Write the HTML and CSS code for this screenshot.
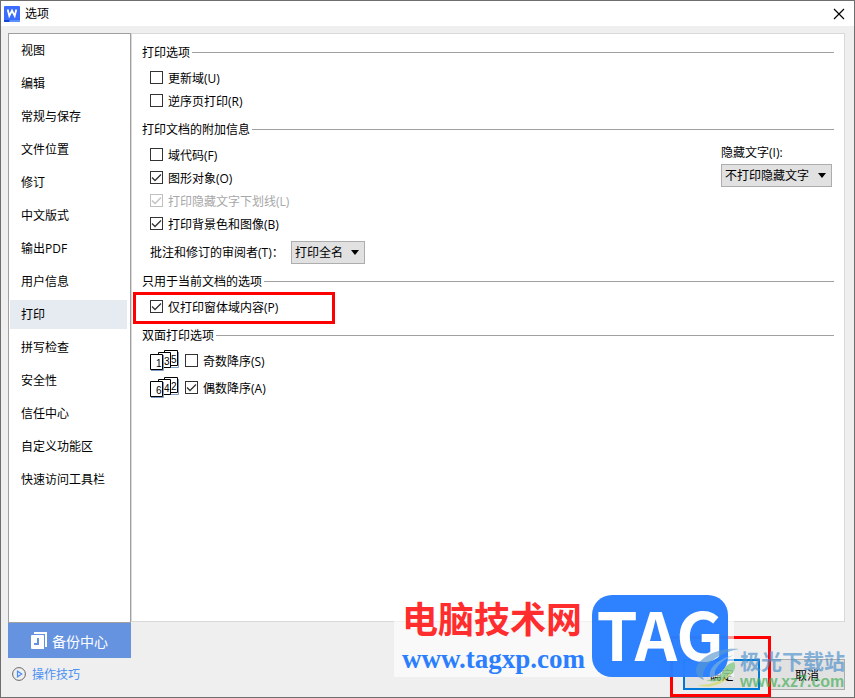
FILE: index.html
```html
<!DOCTYPE html>
<html lang="zh-CN">
<head>
  <meta charset="UTF-8">
  <title>选项</title>
  <meta name="viewport" content="width=device-width, initial-scale=1">
  <link rel="stylesheet" href="styles.css">
</head>
<body>
  <div class="window">
    <header class="titlebar">
      <svg class="logo" width="16" height="16" viewBox="0 0 16 16">
        <rect width="16" height="16" rx="1" fill="#3b6cff"/>
        <path d="M0 14h6l-1 2H1a1 1 0 0 1-1-1z" fill="#1246cc"/>
        <path d="M6 14h10v1a1 1 0 0 1-1 1H5z" fill="#5c92ff"/>
        <path d="M3.700 3.500l1.600 6.500L8 4.500l2.700 5.500 1.600-6.500" fill="none" stroke="#fff" stroke-width="1.800"/>
      </svg>
      <span class="title">选项</span>
      <button class="close" type="button" aria-label="关闭">
        <svg width="12" height="12" viewBox="0 0 12 12"><path d="M1 1l10 10M11 1L1 11" stroke="#000" stroke-width="1.200"/></svg>
      </button>
    </header>

    <main class="content">
      <aside class="side">
        <nav class="menu">
          <a href="#view">视图</a>
          <a href="#edit">编辑</a>
          <a href="#general">常规与保存</a>
          <a href="#files">文件位置</a>
          <a href="#revision">修订</a>
          <a href="#chinese">中文版式</a>
          <a href="#pdf">输出PDF</a>
          <a href="#user">用户信息</a>
          <a href="#print" class="active">打印</a>
          <a href="#spell">拼写检查</a>
          <a href="#security">安全性</a>
          <a href="#trust">信任中心</a>
          <a href="#ribbon">自定义功能区</a>
          <a href="#toolbar">快速访问工具栏</a>
        </nav>
        <button class="backup" type="button">
          <svg width="16" height="18" viewBox="0 0 16 18">
            <path d="M3 0h13v15h-2V2H3z" fill="#fff"/>
            <path d="M1 3h11a1 1 0 0 1 1 1v13H1a1 1 0 0 1-1-1V4a1 1 0 0 1 1-1z" fill="#fff"/>
            <path d="M7 6v6H3" fill="none" stroke="#6593e0" stroke-width="2"/>
          </svg>
          备份中心
        </button>
        <a class="tips" href="#tips">
          <svg width="14" height="14" viewBox="0 0 14 14" fill="none">
            <circle cx="7" cy="7" r="6.400" stroke="#666"/>
            <path d="M5.500 4.200v5.600L9.700 7z" stroke="#4a90f5" stroke-width="1.200"/>
          </svg>
          操作技巧
        </a>
      </aside>

      <section class="main">
        <div class="panel">
          <section class="group">
            <h2>打印选项</h2>
            <label class="row"><input type="checkbox">更新域(U)</label>
            <label class="row"><input type="checkbox">逆序页打印(R)</label>
          </section>

          <section class="group">
            <h2>打印文档的附加信息</h2>
            <div class="columns">
              <div>
                <label class="row"><input type="checkbox">域代码(F)</label>
                <label class="row"><input type="checkbox" checked>图形对象(O)</label>
                <label class="row disabled"><input type="checkbox" checked disabled>打印隐藏文字下划线(L)</label>
                <label class="row"><input type="checkbox" checked>打印背景色和图像(B)</label>
              </div>
              <div class="hidden-text">
                <label for="hidden-text">隐藏文字(I):</label>
                <select id="hidden-text" class="wide"><option>不打印隐藏文字</option></select>
              </div>
            </div>
            <div class="reviewer">
              <label for="reviewer">批注和修订的审阅者(T)：</label>
              <select id="reviewer"><option>打印全名</option></select>
            </div>
          </section>

          <section class="group">
            <h2>只用于当前文档的选项</h2>
            <div class="marked">
              <label class="row"><input type="checkbox" checked>仅打印窗体域内容(P)</label>
            </div>
          </section>

          <section class="group duplex">
            <h2>双面打印选项</h2>
            <div class="order">
              <svg width="29" height="21" viewBox="0 0 29 21">
                <g fill="#fff" stroke="#000">
                  <path d="M16 17.500h12.500V2" stroke="#7d9cc4" fill="none"/>
                  <path d="M14.500.5h13v15h-13z"/>
                  <path d="M8.500 2.500h12v15h-12z"/>
                  <path d="M.5 4.500h12v15H.5z"/>
                  <path d="M1 20.500h12.500V5" stroke="#7d9cc4" fill="none"/>
                </g>
                <text x="6" y="17">1</text><text x="14" y="15">3</text><text x="21" y="13">5</text>
              </svg>
              <label class="row"><input type="checkbox">奇数降序(S)</label>
            </div>
            <div class="order">
              <svg width="29" height="21" viewBox="0 0 29 21">
                <g fill="#fff" stroke="#000">
                  <path d="M16 17.500h12.500V2" stroke="#7d9cc4" fill="none"/>
                  <path d="M14.500.5h13v15h-13z"/>
                  <path d="M8.500 2.500h12v15h-12z"/>
                  <path d="M.5 4.500h12v15H.5z"/>
                  <path d="M1 20.500h12.500V5" stroke="#7d9cc4" fill="none"/>
                </g>
                <text x="6" y="17">6</text><text x="14" y="15">4</text><text x="21" y="13">2</text>
              </svg>
              <label class="row"><input type="checkbox" checked>偶数降序(A)</label>
            </div>
          </section>
        </div>

        <footer class="actions">
          <button class="ok" type="button">确定</button>
          <button type="button">取消</button>
        </footer>
      </section>
    </main>

    <div class="red-frame"></div>

    <div class="site-mark">
      <div class="site-name">
        <strong>电脑技术网</strong>
        <span>www.tagxp.com</span>
      </div>
      <div class="tag">TAG</div>
    </div>

    <div class="download-mark">
      <svg width="46" height="42" viewBox="0 0 46 42">
        <path d="M45 2C24 0 3 11 2 23c0 6 4 9 8 10C5 22 20 7 45 2z" fill="#5a98d0"/>
        <path d="M40 8C26 11 14 20 16 30l5-1C19 21 28 13 40 8z" fill="#7fb4dc"/>
        <path d="M40 15c4 8-4 17-16 19-6 1-10 0-12-1 12 0 16-6 18-11 2-4 6-6 10-7z" fill="#6cc070"/>
        <path d="M4 38c14 0 26-4 34-14-4 11-20 19-34 14z" fill="#d0dc58"/>
      </svg>
      <div class="download-name">
        <strong>极光下载站</strong>
        <span>www.xz7.com</span>
      </div>
    </div>
  </div>
</body>
</html>
```
FILE: styles.css
```css
:root {
  --bg: #efefef;
  --line: #a0a0a0;
  --light-line: #d9d9d9;
  --blue: #6593e0;
  --red: #ff0000;
}

*,
*::before,
*::after {
  box-sizing: border-box;
}

body {
  margin: 0;
  font-family: "Open Sans", "Noto Sans CJK SC", sans-serif;
  font-size: 12px;
  color: #000;
}

button,
select,
input {
  margin: 0;
  font: inherit;
  color: inherit;
}

.window {
  position: relative;
  display: flex;
  flex-direction: column;
  min-height: 100vh;
  border: 1px solid #6e6e6e;
  background: var(--bg);
}

.titlebar {
  display: flex;
  align-items: center;
  height: 25px;
  padding: 0 9px 0 3px;
  background: #fff;
}

.title {
  flex: 1;
  margin-left: 5px;
  line-height: 18px;
}

.close {
  display: flex;
  padding: 0;
  border: none;
  background: none;
}

.content {
  flex: 1;
  display: flex;
  padding: 7px 9px 7px 7px;
}

/* left side */
.side {
  display: flex;
  flex-direction: column;
  width: 123px;
}

.menu {
  flex: 1;
  padding-right: 3px;
  padding-left: 1px;
  border: 1px solid var(--line);
  background: #fff;
}

.menu a {
  display: block;
  height: 29px;
  margin: 2px 0 4px;
  padding-left: 11px;
  line-height: 29px;
  color: #000;
  text-decoration: none;
}

.menu a.active {
  background: #e6eaf1;
}

.backup {
  display: flex;
  align-items: center;
  justify-content: center;
  gap: 5px;
  height: 35px;
  padding: 0;
  border: none;
  background: var(--blue);
  color: #fff;
  font-size: 14px;
}

.tips {
  display: flex;
  align-items: center;
  gap: 6px;
  height: 32px;
  padding-left: 4px;
  color: #4a90f5;
  text-decoration: none;
}

/* right side */
.main {
  flex: 1;
  display: flex;
  flex-direction: column;
}

.panel {
  flex: 1;
  padding: 9px 10px;
  border: 1px solid var(--light-line);
  background: #fff;
}

.group {
  margin-bottom: 8px;
}

.group h2 {
  display: flex;
  align-items: center;
  gap: 2px;
  height: 18px;
  margin: 0 0 5px;
  font-size: 12px;
  font-weight: normal;
}

.group h2::after {
  content: "";
  flex: 1;
  height: 1px;
  background: var(--line);
}

.row {
  display: flex;
  align-items: center;
  gap: 5px;
  height: 23px;
  padding-left: 8px;
}

.row.disabled {
  color: #a8a8a8;
}

input[type="checkbox"] {
  appearance: none;
  width: 13px;
  height: 13px;
  border: 1px solid #333;
  background: #fff;
}

input[type="checkbox"]:checked {
  background: #fff url("data:image/svg+xml,%3Csvg xmlns='http://www.w3.org/2000/svg' viewBox='0 0 11 11'%3E%3Cpath d='M1 5.500l3 3 6-6' fill='none' stroke='%23333' stroke-width='1.300'/%3E%3C/svg%3E") center / 11px 11px no-repeat;
}

input[type="checkbox"]:disabled {
  opacity: 0.3;
}

.columns {
  display: flex;
  justify-content: space-between;
}

.hidden-text {
  padding-right: 2px;
}

.hidden-text label {
  display: block;
  height: 21px;
  line-height: 20px;
}

select {
  appearance: none;
  display: block;
  width: 74px;
  height: 23px;
  padding: 0 3px;
  border: 1px solid #adadad;
  border-radius: 0;
  background: #e1e1e1 url("data:image/svg+xml,%3Csvg xmlns='http://www.w3.org/2000/svg' viewBox='0 0 8 5'%3E%3Cpath d='M0 0h8L4 5z'/%3E%3C/svg%3E") right 5px center / 8px 5px no-repeat;
}

select.wide {
  width: 111px;
}

.reviewer {
  display: flex;
  align-items: center;
  height: 24px;
  margin-top: 5px;
  padding-left: 8px;
}

.reviewer label {
  width: 141px;
}

.marked {
  position: relative;
}

.marked::after {
  content: "";
  position: absolute;
  top: -3px;
  left: -9px;
  width: 202px;
  height: 32px;
  border: 3px solid var(--red);
  pointer-events: none;
}

.duplex h2 {
  margin-bottom: 3px;
}

.order {
  display: flex;
  align-items: center;
  height: 27px;
  padding-left: 8px;
}

.order .row {
  padding-left: 6px;
}

.order text {
  font-family: "Liberation Sans", sans-serif;
  font-size: 10px;
}

.actions {
  display: flex;
  align-items: flex-end;
  justify-content: flex-end;
  gap: 9px;
  height: 68px;
}

.actions button {
  width: 76px;
  height: 31px;
  padding: 0;
  border: 1px solid #adadad;
  background: #e1e1e1;
}

.actions .ok {
  width: 77px;
  border: 2px solid #0078d7;
}

/* overlays */
.red-frame {
  position: absolute;
  right: 83px;
  bottom: 0;
  width: 101px;
  height: 61px;
  border: 3px solid var(--red);
  pointer-events: none;
}

.site-mark {
  position: absolute;
  right: 120px;
  bottom: 20px;
  display: flex;
  justify-content: space-between;
  width: 340px;
  height: 82px;
  padding: 0 6px 0 8px;
  background: rgba(255, 255, 255, 0.6);
  pointer-events: none;
}

.site-name strong {
  display: block;
  height: 44px;
  color: #ff2d2d;
  font-family: "Noto Sans CJK SC", sans-serif;
  font-size: 36px;
  line-height: 44px;
}

.site-name span {
  display: block;
  color: #2b7fff;
  font-family: "Liberation Serif", serif;
  font-size: 27px;
  font-weight: bold;
  line-height: 40px;
}

.tag {
  width: 136px;
  height: 82px;
  border-radius: 20px;
  background: rgba(30, 120, 255, 0.93);
  color: #fff;
  font-family: "Noto Sans CJK SC", sans-serif;
  font-size: 66px;
  font-weight: bold;
  line-height: 74px;
  text-align: center;
}

.download-mark {
  position: absolute;
  right: 9px;
  bottom: 6px;
  display: flex;
  opacity: 0.65;
  pointer-events: none;
}

.download-name strong {
  display: block;
  color: #4c8fcb;
  font-family: "Noto Sans CJK SC", sans-serif;
  font-size: 21px;
  line-height: 26px;
}

.download-name span {
  display: block;
  color: #3cab50;
  font-family: "Liberation Sans", sans-serif;
  font-size: 16px;
  font-weight: bold;
  line-height: 18px;
}
```
